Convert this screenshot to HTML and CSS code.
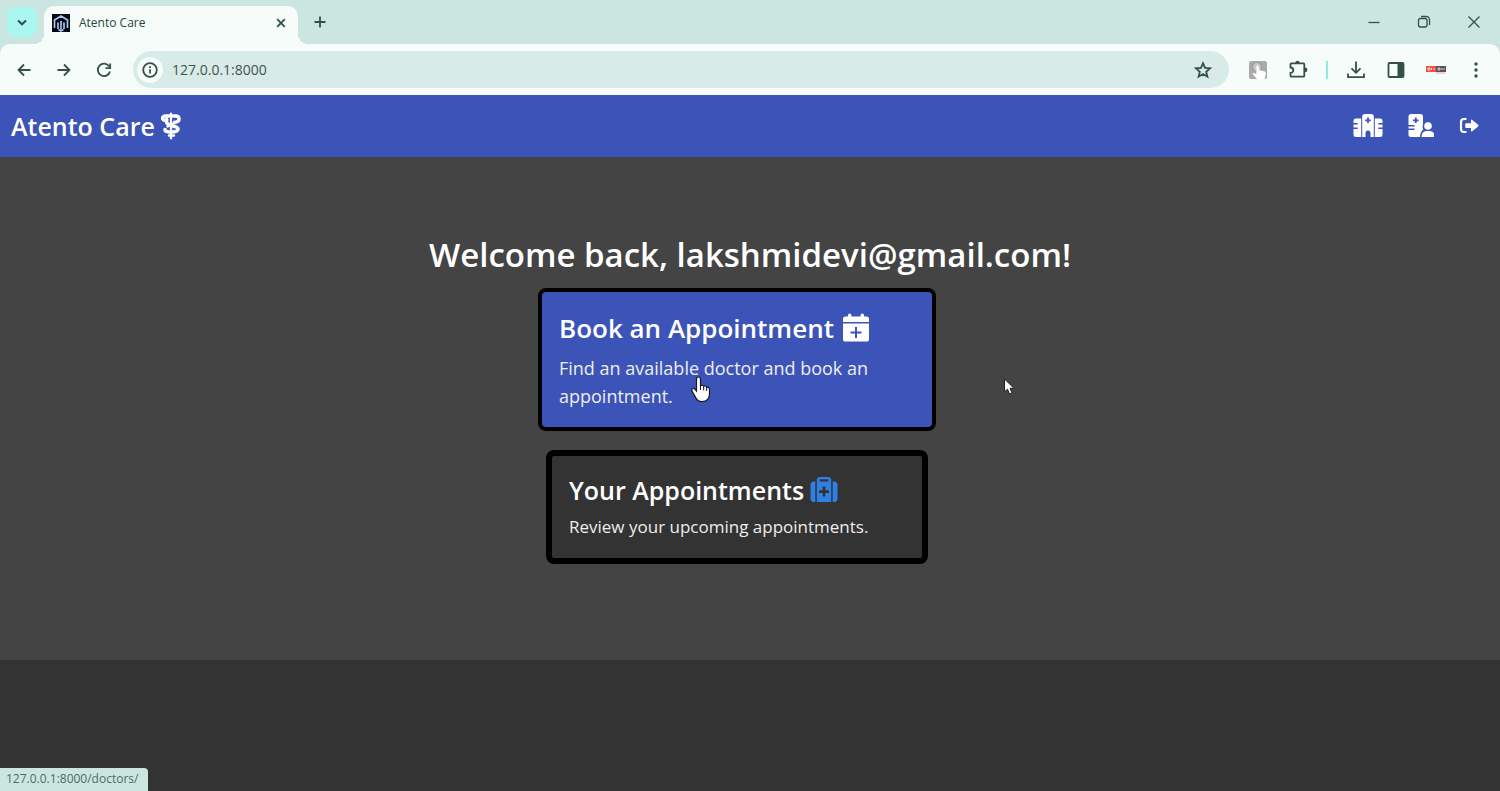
FILE: index.html
```html
<!DOCTYPE html>
<html lang="en">
<head>
<meta charset="utf-8">
<meta name="viewport" content="width=device-width, initial-scale=1">
<title>Atento Care</title>
<link rel="stylesheet" href="styles.css">
</head>
<body>
<header class="browser">
  <div class="tabstrip">
    <button class="tab-search" aria-label="Search tabs"><svg width="20" height="20" viewBox="0 0 20 20"><path d="m6 8.500 4 3.800 4-3.800" stroke-width="2"/></svg></button>
    <div class="tab">
      <svg class="favicon" width="18" height="18" viewBox="0 0 18 18"><rect width="18" height="18" fill="#050a14"/><path d="M2.500 14V6L9 2l6.500 4v8M6 15V8.500M12 15V8.500M9 7v8.500M6.500 15.500 9 17l2.500-1.500" fill="none" stroke="#a9c4ee" stroke-width="1.700"/></svg>
      <span class="tab-title">Atento Care</span>
      <button class="tab-close" aria-label="Close tab"><svg width="16" height="16" viewBox="0 0 16 16"><path d="m4.200 4.200 7.600 7.600m0-7.600-7.600 7.600"/></svg></button>
    </div>
    <button class="icon-button" aria-label="New tab"><svg width="20" height="20" viewBox="0 0 20 20"><path d="M10 4.500v11M4.500 10h11"/></svg></button>
    <div class="window-controls">
      <button class="icon-button" aria-label="Minimize"><svg class="thin" width="20" height="20" viewBox="0 0 20 20"><path d="M4.500 10.500h11"/></svg></button>
      <button class="icon-button" aria-label="Restore"><svg class="thin" width="20" height="20" viewBox="0 0 20 20"><rect x="4.500" y="6.500" width="8.500" height="8.500" rx="2"/><path d="M7 4.500h5.500a3 3 0 0 1 3 3V13"/></svg></button>
      <button class="icon-button" aria-label="Close window"><svg class="thin" width="20" height="20" viewBox="0 0 20 20"><path d="m4.500 4.500 11 11m0-11-11 11"/></svg></button>
    </div>
  </div>
  <div class="toolbar">
    <div class="nav-buttons">
      <button class="icon-button" aria-label="Back"><svg width="20" height="20" viewBox="0 0 20 20"><path d="M16.500 10H4.500M10 4.500 4.500 10l5.500 5.500"/></svg></button>
      <button class="icon-button" aria-label="Forward"><svg width="20" height="20" viewBox="0 0 20 20"><path d="M3.500 10h12M10 4.500l5.500 5.500-5.500 5.500"/></svg></button>
      <button class="icon-button" aria-label="Reload"><svg width="20" height="20" viewBox="0 0 20 20"><path d="M15.200 6.500A6.200 6.200 0 1 0 16 11.500M16.200 3.500v4.700h-4.700"/></svg></button>
    </div>
    <div class="address">
      <button class="site-info" aria-label="Site information"><svg width="20" height="20" viewBox="0 0 20 20"><circle cx="10" cy="10" r="6.800"/><path d="M10 9.200v4.300M10 6.200v1.800"/></svg></button>
      <input class="url" aria-label="Address" value="127.0.0.1:8000">
      <button class="icon-button" aria-label="Bookmark"><svg width="20" height="20" viewBox="0 0 20 20"><path d="m10 3.200 2 4.700 5.100.4-3.900 3.400 1.200 5-4.400-2.700-4.400 2.700 1.200-5-3.900-3.400 5.100-.4Z"/></svg></button>
    </div>
    <div class="extensions">
      <button class="icon-button" aria-label="Touch extension"><svg class="solid" width="20" height="20" viewBox="0 0 20 20"><rect x="1" y="1" width="18" height="18" rx="2" fill="#aaa"/><circle cx="9" cy="7" r="4.500" fill="#c8c8c8" stroke="#999"/><path d="M8.500 5.500q1.200-.8 1.800.4l1 4 5.500 1.500q1.500.6 1 2.600L16.500 19H9l-4.500-5q.5-1.500 2-.7l1.800 1Z" fill="#fff"/></svg></button>
      <button class="icon-button" aria-label="Extensions"><svg width="20" height="20" viewBox="0 0 20 20"><path d="M3.500 3.300h11.800q1 0 1 1v11.400q0 1-1 1H3.500q-1 0-1-1V13a2.600 2.600 0 0 0 0-5.500V4.300q0-1 1-1Z"/><path class="fill" d="M7.300 3a2.200 2.200 0 0 1 4.400 0ZM17 7.500a2.300 2.300 0 0 1 0 4.800Z"/></svg></button>
      <span class="divider"></span>
      <button class="icon-button" aria-label="Downloads"><svg width="20" height="20" viewBox="0 0 20 20"><path d="M10 1.500v11M5.500 8.300 10 12.800l4.500-4.500M2 13.500v3.700h16v-3.700"/></svg></button>
      <button class="icon-button" aria-label="Side panel"><svg width="20" height="20" viewBox="0 0 20 20"><rect x="2.500" y="3" width="15" height="14" rx="1"/><path class="fill" d="M11.500 3h6v14h-6Z"/></svg></button>
      <button class="icon-button" aria-label="Blocker extension"><svg class="solid" width="20" height="20" viewBox="0 0 20 20"><rect x="0" y="6" width="10" height="6" fill="#ee5145"/><rect x="10" y="6" width="10" height="6" fill="#555"/><path d="M2 8h2v2H2zM5.500 8v2M8 8v2M12 8h2v2h-2zM16 8v2M18 8v2" fill="none" stroke="#eee" stroke-width=".8"/><path d="M10 13h9" stroke="#f2a49d"/></svg></button>
      <button class="icon-button" aria-label="Menu"><svg width="20" height="20" viewBox="0 0 20 20"><g class="fill"><circle cx="10" cy="4" r="1.700"/><circle cx="10" cy="10" r="1.700"/><circle cx="10" cy="16" r="1.700"/></g></svg></button>
    </div>
  </div>
</header>

<nav class="navbar">
  <a class="brand" href="#">Atento Care
    <svg width="20" height="28" viewBox="0 0 20 28"><g fill="none" stroke="#fff" stroke-linecap="round"><path d="M10 1.500v25" stroke-width="2.200"/><path d="M8.500 4H4a2.200 2.200 0 1 0 1.600 3.500M11.500 4H15a3 3 0 0 1 .8 5.900q-1 .3-2.300.3" stroke-width="3.400"/><path d="M5.500 7.500v2c0 5.500 11.500 3.500 11.500 7.500 0 2.300-2.800 3-7 3-4.500 0-6-.7-6-2.500" stroke-width="3.600"/><path d="M13 11c-1 1.500-4 2-6.500 3.500M8 23.500h5" stroke-width="2.400"/></g></svg>
  </a>
  <div class="nav-links">
    <a href="#" aria-label="Hospital"><svg width="30" height="26" viewBox="0 0 30 26" fill="#fff"><path fill-rule="evenodd" d="M9.200 3.500Q9.200 1 11.700 1h6.600q2.500 0 2.500 2.500V24h-3.300v-4a2.500 2.500 0 0 0-5 0v4H9.200ZM14.100 4.500v1.900h-1.900v1.800h1.900v1.900h1.800V8.200h1.900V6.400h-1.900V4.500Z"/><path d="M.5 8.200Q.5 5.500 3 5.500h5.200V24H3q-2.500 0-2.500-2.500V16h4.200v-1.500H.5V11.500h4.200V10H.5ZM29.500 8.200Q29.500 5.500 27 5.500h-5.200V24H27q2.500 0 2.500-2.500V16h-4.200v-1.500h4.200v-3h-4.200V10h4.200Z"/></svg></a>
    <a href="#" aria-label="Doctors"><svg width="26" height="26" viewBox="0 0 26 26" fill="#fff"><path fill-rule="evenodd" d="M.5 3.500Q.5 1 3 1h9.500Q15 1 15 3.500v8a6 6 0 0 0 .2 5Q12 19 12 24H3q-2.500 0-2.500-2.500V17h6v-1.500h-6V13.500h6V12h-6ZM6.900 4.500v1.900H5v1.800h1.900v1.900h1.800V8.200h1.900V6.400H8.700V4.500Z"/><circle cx="20" cy="13" r="3.800"/><path d="M13.500 24q0-6 5-6h3q5 0 5 6Z"/></svg></a>
    <a href="#" aria-label="Log out"><svg width="20" height="20" viewBox="0 0 20 20"><path d="M7.500 3H5Q2 3 2 6v7q0 3 3 3h2.500" fill="none" stroke="#fff" stroke-width="2.200"/><path d="M12 4.500q.2-1.400 1.300-.6l5.800 4.900q.9.800 0 1.600l-5.800 4.900q-1.100.8-1.300-.6V12H7.500q-1.300 0-1.300-1.300V8.500q0-1.300 1.300-1.300H12Z" fill="#fff"/></svg></a>
  </div>
</nav>

<main class="hero">
  <h1>Welcome back, lakshmidevi@gmail.com!</h1>
  <div class="cards">
    <a class="card card-active" href="#">
      <h2>Book an Appointment
        <svg width="26" height="30" viewBox="0 0 26 30" fill="#fff"><path d="M0 9V6q0-2.500 2.500-2.500H5V2q0-1.600 1.700-1.600T8.400 2v1.500h9.200V2q0-1.600 1.700-1.600T21 2v1.500h2.500Q26 3.500 26 6v3Z"/><path fill-rule="evenodd" d="M0 10.500h26V26q0 2.600-2.600 2.600H2.600Q0 28.600 0 26ZM12 14v4.500H7.500v2H12V25h2v-4.500h4.500v-2H14V14Z"/></svg>
      </h2>
      <p>Find an available doctor and book an appointment.</p>
    </a>
    <a class="card" href="#">
      <h2>Your Appointments
        <svg width="28" height="28" viewBox="0 0 28 28" fill="#2f80e4"><path d="M5.300 5.500V26H4q-3.500 0-3.500-3.500V9q0-3.500 3.500-3.500ZM22.700 5.500V26H24q3.500 0 3.500-3.500V9q0-3.500-3.500-3.500Z"/><path fill-rule="evenodd" d="M6.800 4q0-3 3-3h8.400q3 0 3 3v22H6.800ZM9.800 3.200v2.300h8.400V3.200ZM12.600 10.500v3.700H9V17h3.600v3.500h2.800V17H19v-2.800h-3.600v-3.700Z"/></svg>
      </h2>
      <p>Review your upcoming appointments.</p>
    </a>
  </div>
</main>
<footer class="footer"></footer>

<div class="link-status">127.0.0.1:8000/doctors/</div>
<svg class="pointer pointer-hand" width="20" height="27" viewBox="0 0 20 27"><path d="M7.500 1Q9.500 1 9.500 3v7q.5-1.300 2-.8 1 .3 1.200 1.300.6-1 1.900-.5 1 .4 1.100 1.600.6-.7 1.700-.2 1.100.5 1.100 2v4.200q0 8-7.500 8-4 0-6-3.500l-4-7q-.8-2 .8-2.600 1.200-.4 2.300.8l1.400 1.700V3q0-2 2-2Z" fill="#fff" stroke="#151925" stroke-width="1.200"/><path d="M9.500 10v4M12.700 11v3.500M15.700 12v3" stroke="#151925"/></svg>
<svg class="pointer pointer-arrow" width="13" height="18" viewBox="0 0 13 18"><path d="M1.500 1v12.800l3-2.600 2 4.800 2.500-1-2-4.700h4Z" fill="#fff" stroke="#202020"/></svg>
</body>
</html>
```
FILE: styles.css
```css
* { box-sizing: border-box; }

body {
  margin: 0;
  min-height: 100vh;
  display: flex;
  flex-direction: column;
  background: #333;
  color: #fff;
  font-family: "Open Sans", "Noto Sans", sans-serif;
}

h1, h2, p { margin: 0; }
a { color: inherit; text-decoration: none; }
svg { display: block; flex: none; }
button {
  padding: 0;
  border: 0;
  background: none;
  display: grid;
  place-items: center;
}

/* Browser window */
.browser {
  background: #cbe6e1;
  color: #29433e;
}
.browser svg:not(.solid):not(.favicon) {
  fill: none;
  stroke: #34504a;
  stroke-width: 1.8;
}
.browser svg.thin { stroke-width: 1.3 !important; }
.browser .fill { fill: #34504a; stroke: none; }
.icon-button { width: 20px; height: 20px; }

.tabstrip {
  height: 44px;
  display: flex;
  align-items: center;
  padding: 0 16px 0 7px;
}
.tab-search {
  width: 30px;
  height: 30px;
  border-radius: 9px;
  background: #a9f7f0;
}
.tab {
  position: relative;
  width: 254px;
  height: 38px;
  align-self: flex-end;
  margin: 0 12px 0 7px;
  padding: 0 9px 5px 8px;
  display: flex;
  align-items: center;
  gap: 9px;
  border-radius: 10px 10px 0 0;
  background: #f5fcf9;
}
.tab::before, .tab::after {
  content: "";
  position: absolute;
  bottom: 0;
  width: 10px;
  height: 10px;
}
.tab::before {
  right: 100%;
  background: radial-gradient(circle at 0 0, transparent 10px, #f5fcf9 10px);
}
.tab::after {
  left: 100%;
  background: radial-gradient(circle at 100% 0, transparent 10px, #f5fcf9 10px);
}
.tab-title {
  flex: 1;
  font-size: 12px;
  line-height: 16px;
}
.tab-close { width: 16px; height: 16px; }
.window-controls {
  margin-left: auto;
  display: flex;
  gap: 30px;
}

.toolbar {
  height: 51px;
  display: flex;
  align-items: center;
  gap: 19px;
  padding: 0 14px;
  border-radius: 10px 10px 0 0;
  background: #f5fcf9;
}
.nav-buttons { display: flex; gap: 20px; }
.address {
  flex: 1;
  height: 37px;
  display: flex;
  align-items: center;
  gap: 9px;
  padding: 0 16px 0 4px;
  border-radius: 19px;
  background: #d8ebe8;
}
.site-info {
  width: 26px;
  height: 26px;
  border-radius: 50%;
  background: #f5fcf9;
}
.url {
  flex: 1;
  min-width: 0;
  padding: 0;
  border: 0;
  background: none;
  color: #44534f;
  font: 14px/20px "Open Sans", "Noto Sans", sans-serif;
}
.extensions { display: flex; align-items: center; gap: 20px; }
.divider {
  width: 2px;
  height: 18px;
  margin: 0 -2px;
  background: #8fe9e0;
}

/* Site navigation */
.navbar {
  min-height: 62px;
  display: flex;
  align-items: center;
  justify-content: space-between;
  padding: 0 21px 0 11px;
  background: #3c54b8;
}
.brand {
  display: flex;
  align-items: center;
  gap: 6px;
  font-size: 25px;
  font-weight: 600;
  line-height: 32px;
}
.nav-links { display: flex; align-items: center; gap: 25px; }

/* Welcome area */
.hero {
  display: flex;
  flex-direction: column;
  align-items: center;
  padding: 76px 20px 96px;
  background: #444;
}
h1 {
  font-size: 33px;
  font-weight: 600;
  line-height: 44px;
  text-align: center;
}
.cards {
  width: 100%;
  max-width: 408px;
  padding-right: 26px;
  margin-top: 11px;
}
.card {
  display: block;
  padding: 17px 17px 18px;
  border: 6px solid #000;
  border-radius: 8px;
  background: #333;
}
.card h2 {
  display: flex;
  align-items: center;
  gap: 6px;
  font-size: 25px;
  font-weight: 600;
  line-height: 34px;
}
.card p {
  margin-top: 6px;
  font-size: 17px;
  line-height: 27px;
  color: #eee;
}
.card-active {
  margin: 0 -8px 19px;
  padding: 18px 17px 17px;
  border-width: 4px;
  background: #3c54b8;
}
.card-active h2 {
  gap: 9px;
  font-size: 26px;
  line-height: 36px;
}
.card-active p {
  margin-top: 8px;
  font-size: 18px;
  line-height: 28px;
}

.footer { flex: 1; background: #333; }

/* Overlays */
.link-status {
  position: fixed;
  left: 0;
  bottom: 0;
  padding: 3px 10px 4px 6px;
  border-radius: 0 4px 0 0;
  background: #cbe6e1;
  color: #536663;
  font-size: 12px;
  line-height: 16px;
}
.pointer { position: absolute; }
.pointer-hand { left: 691px; top: 376px; }
.pointer-arrow { left: 1003px; top: 378px; }
```
